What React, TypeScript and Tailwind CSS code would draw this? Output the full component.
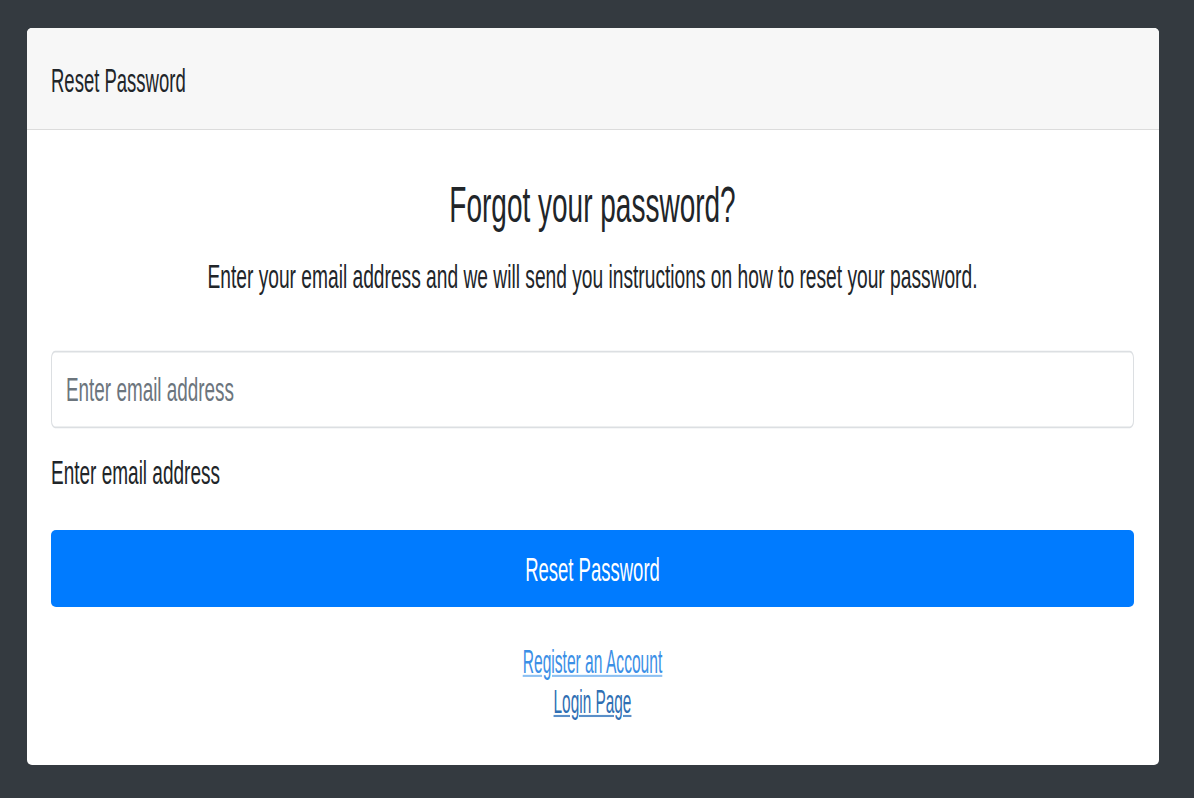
import React from "react";

const font = { fontFamily: '"Liberation Sans", Arial, sans-serif' };

function Line({
  children,
  className = "",
}: {
  children: React.ReactNode;
  className?: string;
}) {
  return (
    <span className={`inline-block leading-none scale-y-[1.8] ${className}`}>
      {children}
    </span>
  );
}

export default function App() {
  return (
    <div
      className="min-h-[798px] bg-[#343a40] pt-[28px] pl-[27px] pr-[35px] pb-[34px]"
      style={font}
    >
      <div className="overflow-hidden rounded-[5px] bg-white text-[#212529]">
        {/* header */}
        <div className="flex h-[102px] items-center border-b border-[#dcdcdc] bg-[#f7f7f7] px-[24px] pt-[6px]">
          <Line className="text-[18.5px]">Reset Password</Line>
        </div>

        {/* body */}
        <div className="px-[24px] pr-[25px] pb-[43px]">
          <div className="mt-[51px] flex h-[50px] items-center justify-center">
            <Line className="text-[28px] scale-y-[1.7]">Forgot your password?</Line>
          </div>
          <div className="mt-[26px] flex h-[40px] items-center justify-center">
            <Line className="text-[19.2px] scale-y-[1.75]">
              Enter your email address and we will send you instructions on how
              to reset your password.
            </Line>
          </div>

          <form onSubmit={(e) => e.preventDefault()}>
            <div className="mt-[54px] flex h-[77px] items-center">
              <input
                type="email"
                placeholder="Enter email address"
                className="h-[43px] w-full scale-y-[1.8] rounded-[4px] border border-[#dcdfe2] bg-white px-[14px] text-[18.9px] text-[#495057] outline-none placeholder:text-[#6c757d]"
              />
            </div>
            <div className="mt-[24px] flex h-[40px] items-center">
              <Line className="text-[19px] scale-y-[1.75]">Enter email address</Line>
            </div>
            <button
              type="submit"
              className="mt-[38px] flex h-[77px] w-full items-center justify-center rounded-[5px] bg-[#007bff] pt-[4px] text-white"
            >
              <Line className="text-[18.5px]">Reset Password</Line>
            </button>
          </form>

          <div className="mt-[35px] flex flex-col items-center">
            <a
              href="#"
              className="flex h-[40px] items-center text-[#3b8fe6] no-underline"
            >
              <Line className="text-[15.6px] scale-y-[2.1] underline decoration-[#8cc0f2]">
                Register an Account
              </Line>
            </a>
            <a
              href="#"
              className="flex h-[40px] items-center text-[#2f6fb3] no-underline"
            >
              <Line className="text-[15.4px] scale-y-[2.1] underline decoration-[#5a8fc8]">
                Login Page
              </Line>
            </a>
          </div>
        </div>
      </div>
    </div>
  );
}
